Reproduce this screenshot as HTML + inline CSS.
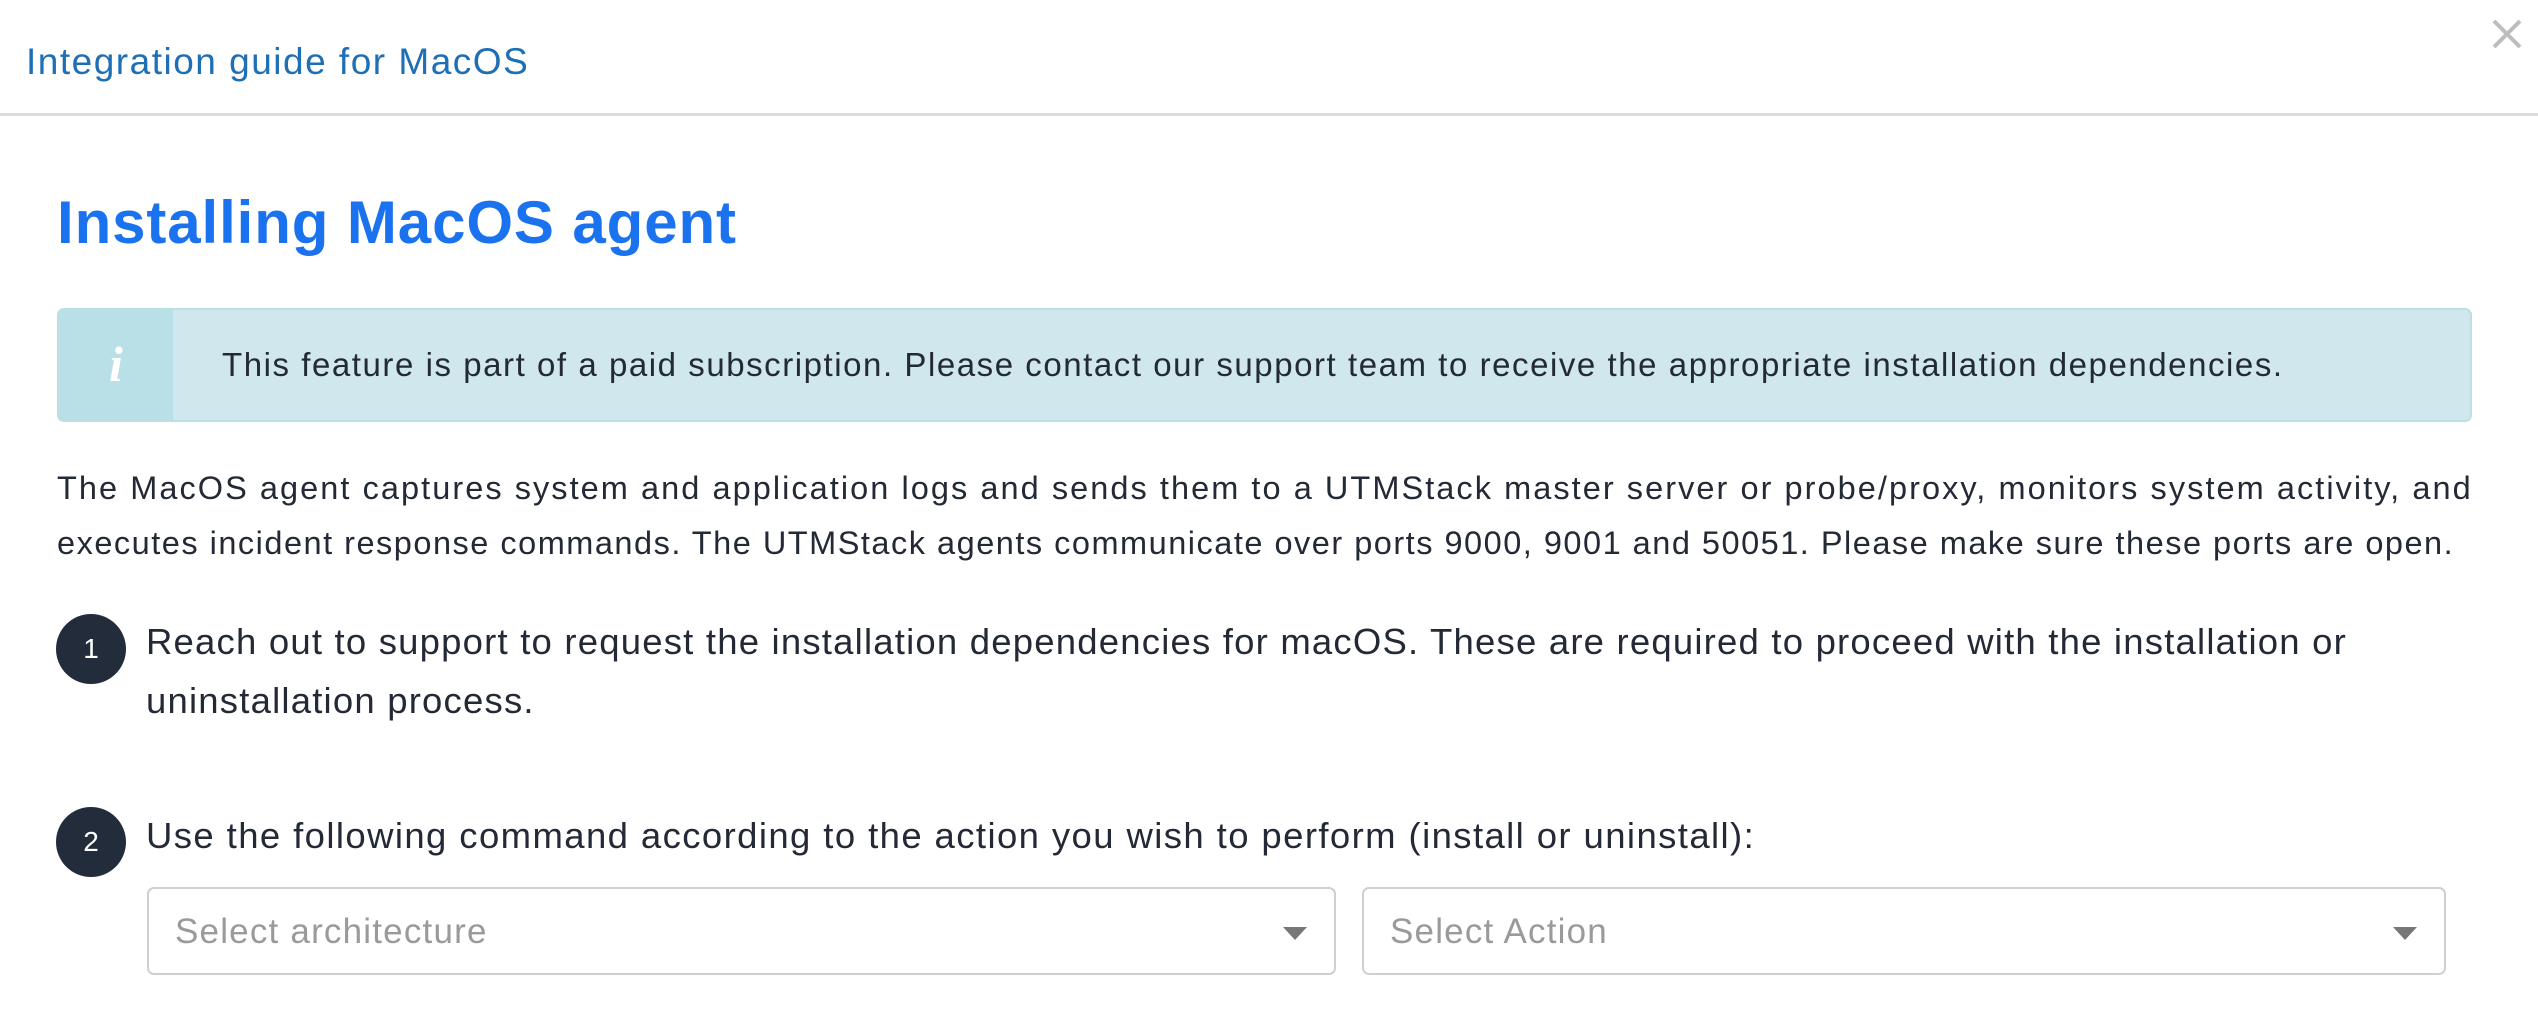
<!DOCTYPE html>
<html><head><meta charset="utf-8"><style>
*{margin:0;padding:0;box-sizing:border-box}
body{width:2538px;height:1026px;background:#fff;font-family:"Liberation Sans",sans-serif;color:#232a35;position:relative;overflow:hidden}
.abs{position:absolute;white-space:nowrap}
.hdr{left:26px;top:41px;font-size:37px;color:#1f6fb5;letter-spacing:1.5px}
.div{left:0;top:113px;width:2538px;height:3px;background:#dcdcdc}
.h1{left:57px;top:188px;font-size:60px;font-weight:bold;color:#1b72ef;letter-spacing:0.9px}
.alert{left:57px;top:308px;width:2415px;height:114px;background:#cfe7ed;border:2px solid #bcdfe6;border-radius:7px;overflow:hidden}
.alert .ic{position:absolute;left:0;top:0;width:114px;height:112px;background:#b9dfe7;color:#fff;font-family:"Liberation Serif",serif;font-style:italic;font-weight:bold;font-size:50px;text-align:center;line-height:108px}
.alert .t{position:absolute;left:163px;top:36px;font-size:33px;white-space:nowrap;color:#232a35;letter-spacing:1.55px}
.p{left:57px;font-size:32.5px;color:#232a35;letter-spacing:2.05px}
.circ{width:70px;height:70px;border-radius:50%;background:#232c3a;color:#fff;font-size:28px;text-align:center;line-height:70px}
.st{left:146px;font-size:36.5px;color:#232a35}
.sel{height:88px;border:2px solid #cfcfcf;border-radius:7px;top:887px}
.sel span{position:absolute;left:26px;top:23px;font-size:35px;color:#9a9a9a;letter-spacing:1.2px}
.sel i{position:absolute;right:27px;top:38px;width:0;height:0;border-left:12px solid transparent;border-right:12px solid transparent;border-top:13px solid #777}
</style></head><body>
<div class="abs hdr">Integration guide for MacOS</div>
<svg class="abs" style="left:2491px;top:19px" width="32" height="30" viewBox="0 0 32 30"><path d="M3 2L29 28M29 2L3 28" stroke="#bdbdbd" stroke-width="4"/></svg>
<div class="abs div"></div>
<div class="abs h1">Installing MacOS agent</div>
<div class="abs alert"><div class="ic">i</div><div class="t">This feature is part of a paid subscription. Please contact our support team to receive the appropriate installation dependencies.</div></div>
<div class="abs p" style="top:470px">The MacOS agent captures system and application logs and sends them to a UTMStack master server or probe/proxy, monitors system activity, and</div>
<div class="abs p" style="top:525px;letter-spacing:1.5px">executes incident response commands. The UTMStack agents communicate over ports 9000, 9001 and 50051. Please make sure these ports are open.</div>
<div class="abs circ" style="left:56px;top:614px">1</div>
<div class="abs st" style="top:621px;letter-spacing:1.2px">Reach out to support to request the installation dependencies for macOS. These are required to proceed with the installation or</div>
<div class="abs st" style="top:680px;letter-spacing:1.2px">uninstallation process.</div>
<div class="abs circ" style="left:56px;top:807px">2</div>
<div class="abs st" style="top:815px;letter-spacing:1.4px">Use the following command according to the action you wish to perform (install or uninstall):</div>
<div class="abs sel" style="left:147px;width:1189px"><span>Select architecture</span><i></i></div>
<div class="abs sel" style="left:1362px;width:1084px"><span>Select Action</span><i></i></div>
</body></html>
